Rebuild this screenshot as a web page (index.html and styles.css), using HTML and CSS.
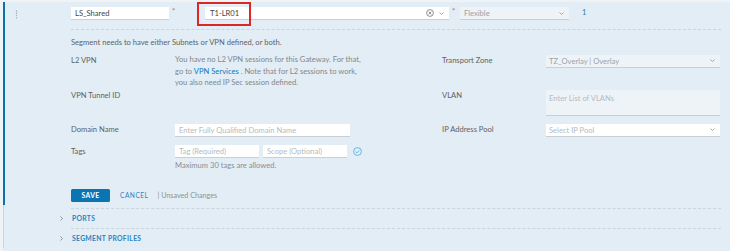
FILE: index.html
```html
<!DOCTYPE html>
<html lang="en">
<head>
  <meta charset="UTF-8" />
  <title>Segments</title>
  <link rel="stylesheet" href="styles.css">
</head>
<body>
  <div class="segment">
    <div class="editor">
      <div class="head">
        <span class="handle">
          <svg width="3" height="9" viewBox="0 0 3 9"><circle cx="1.5" cy="1" r="0.7"/><circle cx="1.5" cy="3.3" r="0.7"/><circle cx="1.5" cy="5.6" r="0.7"/><circle cx="1.5" cy="7.9" r="0.7"/></svg>
        </span>
        <input type="text" class="name-input" value="LS_Shared" />
        <span class="required wide">*</span>
        <div class="combo gateway">
          <span class="combo-value">T1-LR01</span>
          <svg class="clear-icon" width="8" height="8" viewBox="0 0 8 8"><circle cx="4" cy="4" r="3.4"/><path d="M2.6 2.6l2.8 2.8M5.4 2.6L2.6 5.4"/></svg>
          <svg class="chevron" width="5" height="3" viewBox="0 0 5 3"><path d="M0.5 0.5L2.5 2.5L4.5 0.5"/></svg>
          <div class="callout"></div>
        </div>
        <span class="required">*</span>
        <div class="combo flexible disabled">
          <span class="combo-value">Flexible</span>
          <svg class="chevron" width="5" height="3" viewBox="0 0 5 3"><path d="M0.5 0.5L2.5 2.5L4.5 0.5"/></svg>
        </div>
        <span class="count">1</span>
      </div>

      <div class="divider"></div>

      <p class="hint">Segment needs to have either Subnets or VPN defined, or both.</p>

      <div class="form-grid">
        <label>L2 VPN</label>
        <p class="info">You have no L2 VPN sessions for this Gateway. For that,<br>go to <a href="#">VPN Services</a> . Note that for L2 sessions to work,<br>you also need IP Sec session defined.</p>
        <label>Transport Zone</label>
        <div class="combo disabled">
          <span class="combo-value">TZ_Overlay | Overlay</span>
          <svg class="chevron" width="5" height="3" viewBox="0 0 5 3"><path d="M0.5 0.5L2.5 2.5L4.5 0.5"/></svg>
        </div>

        <label>VPN Tunnel ID</label>
        <div></div>
        <label>VLAN</label>
        <textarea class="vlan" placeholder="Enter List of VLANs"></textarea>

        <label>Domain Name</label>
        <div><input type="text" class="domain" placeholder="Enter Fully Qualified Domain Name" /></div>
        <label>IP Address Pool</label>
        <div class="combo">
          <span class="combo-value placeholder">Select IP Pool</span>
          <svg class="chevron" width="5" height="3" viewBox="0 0 5 3"><path d="M0.5 0.5L2.5 2.5L4.5 0.5"/></svg>
        </div>

        <label>Tags</label>
        <div>
          <div class="tags">
            <input type="text" class="tag" placeholder="Tag (Required)" />
            <input type="text" class="tag" placeholder="Scope (Optional)" />
            <svg class="check-icon" width="9" height="9" viewBox="0 0 9 9"><circle cx="4.5" cy="4.5" r="3.9"/><path d="M2.7 4.6l1.3 1.3 2.3-2.5"/></svg>
          </div>
          <div class="note">Maximum 30 tags are allowed.</div>
        </div>
      </div>

      <div class="actions">
        <button class="save-btn">SAVE</button>
        <button class="cancel-btn">CANCEL</button>
        <span class="unsaved">| Unsaved Changes</span>
      </div>
    </div>

    <div class="sections">
      <div class="section-row">
        <svg class="caret" width="3" height="5" viewBox="0 0 3 5"><path d="M0.5 0.5L2.5 2.5L0.5 4.5"/></svg>
        PORTS
      </div>
      <div class="section-row">
        <svg class="caret" width="3" height="5" viewBox="0 0 3 5"><path d="M0.5 0.5L2.5 2.5L0.5 4.5"/></svg>
        SEGMENT PROFILES
      </div>
    </div>
  </div>
</body>
</html>
```

FILE: styles.css
```css
body {
  margin: 0;
  font-family: 'Lato', 'Liberation Sans', sans-serif;
  font-size: 7.6px;
  color: #5e6266;
  background-color: #eff3f6;
  height: 251px;
  overflow: hidden;
}
.segment {
  margin: 2px 0 0 3px;
  background-color: #e3edf5;
  height: 249px;
}
.editor {
  border-left: 2px solid #0a72a8;
  padding: 0 9px 3px 66px;
}
.head {
  display: flex;
  align-items: flex-start;
  padding-top: 5px;
  margin-left: -57px;
}
.handle {
  width: 57px;
  padding-top: 3px;
  line-height: 0;
}
.handle svg {
  fill: #9aa7b1;
  margin-left: 1px;
}
input, textarea {
  font-family: inherit;
  font-size: 7.6px;
  box-sizing: border-box;
  border: 0;
  border-bottom: 1px solid #c9cfd4;
  background-color: #ffffff;
  color: #444;
  outline: none;
  padding: 0 4px;
  margin: 0;
}
input {
  height: 13px;
}
input::placeholder, textarea::placeholder {
  color: #b4bbc1;
}
.name-input {
  width: 98px;
}
.required {
  color: #d85c5c;
  width: 11px;
  padding-left: 3px;
  box-sizing: border-box;
  line-height: 8px;
}
.required.wide {
  width: 36px;
}
.combo {
  position: relative;
  display: flex;
  align-items: center;
  height: 13px;
  box-sizing: border-box;
  padding: 0 3px 0 4px;
  background-color: #ffffff;
  border-bottom: 1px solid #c9cfd4;
  color: #444;
}
.combo-value {
  flex: 1;
}
.combo-value.placeholder {
  color: #b4bbc1;
}
.combo.disabled {
  background-color: #eef3f7;
  color: #9aa2a8;
}
.gateway {
  width: 244px;
  padding-left: 5px;
}
.flexible {
  width: 109px;
}
.chevron {
  fill: none;
  stroke: #8d959b;
  stroke-width: 0.8;
  margin-right: 2px;
}
.clear-icon {
  fill: none;
  stroke: #777;
  stroke-width: 0.8;
  margin-right: 5px;
}
.callout {
  position: absolute;
  left: -8px;
  top: -5px;
  width: 54px;
  height: 24px;
  box-sizing: border-box;
  border: 2px solid #dc2727;
}
.count {
  color: #2a7cb8;
  margin-left: 13px;
  line-height: 10px;
}
.divider {
  border-top: 1px dashed #c8d5df;
  margin-top: 9px;
}
.hint {
  margin: 6px 0 0;
  line-height: 12px;
}
.form-grid {
  display: grid;
  grid-template-columns: 104px 267px 104px 174px;
  grid-template-rows: 35px 34px 22px auto;
  align-items: start;
  margin-top: 6px;
}
.form-grid label {
  line-height: 12px;
}
.info {
  margin: 0;
  line-height: 11.7px;
  color: #84878a;
}
.info a {
  color: #0a79bd;
  text-decoration: none;
}
.form-grid .combo {
  height: 12.5px;
  margin-top: 1px;
  padding-left: 3px;
}
.vlan {
  display: block;
  width: 174px;
  height: 26px;
  resize: none;
  padding: 3px 3px;
  background-color: #eef3f8;
  margin-top: 1px;
}
.domain {
  width: 175px;
  height: 12.5px;
  margin-top: 1px;
}
.tags {
  display: flex;
  align-items: center;
  gap: 4px;
}
.tag {
  width: 84px;
  height: 12.5px;
}
.check-icon {
  fill: none;
  stroke: #49a9e0;
  stroke-width: 0.8;
  margin-left: 2px;
}
.note {
  color: #8a8d90;
  line-height: 12px;
  margin-top: 1.5px;
}
.actions {
  display: flex;
  align-items: center;
  margin-top: 18px;
}
.save-btn {
  width: 39px;
  height: 12.5px;
  border: none;
  border-radius: 1.5px;
  background-color: #0a75b2;
  color: white;
  font-family: inherit;
  font-size: 6.8px;
  font-weight: bold;
  letter-spacing: 0.4px;
  padding: 0;
}
.cancel-btn {
  border: none;
  background: none;
  color: #2f82bb;
  font-family: inherit;
  font-size: 6.6px;
  letter-spacing: 0.5px;
  padding: 0;
  margin-left: 10px;
}
.unsaved {
  color: #8e9296;
  margin-left: 9px;
  font-size: 7.2px;
}
.sections {
  border-left: 1px solid #cad4dc;
  padding: 3px 9px 0 67px;
  height: 40px;
}
.section-row {
  display: flex;
  align-items: center;
  border-top: 1px dashed #c8d5df;
  height: 19px;
  color: #2f82bb;
  font-size: 6.8px;
  font-weight: bold;
  letter-spacing: 0.3px;
  padding-left: 1px;
}
.caret {
  fill: none;
  stroke: #7b8187;
  stroke-width: 0.8;
  margin-left: -12px;
  margin-right: 9px;
}
```
